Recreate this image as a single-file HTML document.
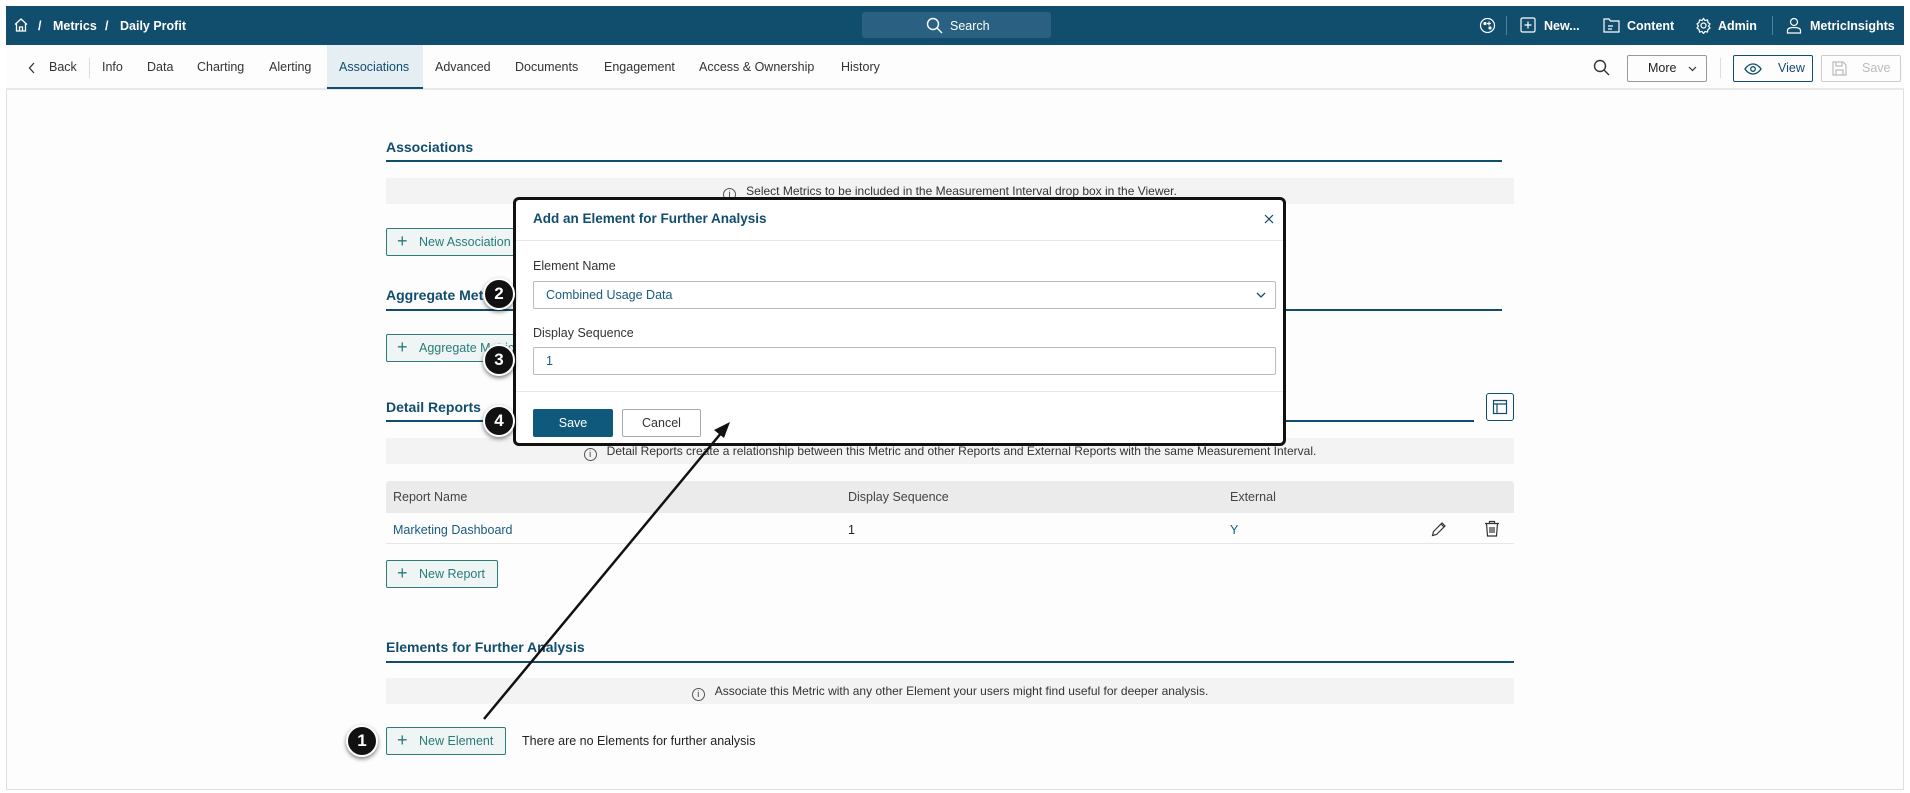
<!DOCTYPE html>
<html><head><meta charset="utf-8">
<style>
*{box-sizing:border-box;margin:0;padding:0}
body{width:1910px;height:793px;overflow:hidden;background:#fff;font-family:"Liberation Sans",sans-serif;font-size:12.5px;color:#222;position:relative}
.frame{position:absolute;left:6px;top:6px;width:1898px;height:784px;background:#fdfdfd;border:1px solid #e0e0e0;border-top:none}
.abs{position:absolute}
.top{position:absolute;left:6px;top:6px;width:1898px;height:39px;background:#114d6d;color:#fff;font-size:12.5px}
.top .t{position:absolute;top:13px;font-weight:bold;white-space:nowrap}
.tabs{position:absolute;left:6px;top:45px;width:1898px;height:45px;border-bottom:2px solid #e8e8e8;background:#fdfdfd}
.tab{position:absolute;top:15px;font-size:12.5px;color:#333;white-space:nowrap}
.h{position:absolute;left:386px;font-weight:bold;font-size:14px;color:#114d6d}
.line{position:absolute;left:386px;height:1.5px;background:#114d6d}
.band{position:absolute;left:386px;width:1128px;height:26px;background:#f3f3f3;font-size:12px;color:#333;text-align:center;line-height:26px}
.btn{position:absolute;left:386px;height:28px;border:1px solid #2d7c78;background:#eef5f4;color:#2b7a78;font-size:12.5px;line-height:26px;padding-left:32px;border-radius:2px;white-space:nowrap;overflow:hidden}
.btn:before{content:"+";position:absolute;left:10px;top:-1px;font-size:18px;font-weight:normal}
.info{display:inline-block;width:13px;height:13px;border:1px solid #555;border-radius:50%;font-size:9px;line-height:11px;text-align:center;margin-right:10px;vertical-align:-2px}
.badge{position:absolute;width:32px;height:32px;border-radius:50%;background:#111;border:2px solid #fff;box-shadow:0 2px 4px rgba(0,0,0,.5);color:#fff;font-weight:bold;font-size:17px;text-align:center;line-height:28px}
.modal{position:absolute;left:513px;top:197px;width:773px;height:249px;background:#fff;border:3px solid #111;border-radius:6px}
.inp{position:absolute;left:17px;width:743px;height:28px;border:1px solid #bbb;border-radius:2px;color:#1a5a80;font-size:12.5px;line-height:26px;padding-left:12px}
</style></head><body>
<div class="frame"></div>
<div class="top">
<svg class="abs" style="left:7px;top:11px" width="16" height="16" viewBox="0 0 16 16" fill="none" stroke="#fff" stroke-width="1.3"><path d="M2 7.5L8 2l6 5.5M3.5 6.5V14h9V6.5M6.5 14v-4h3v4"/></svg>
<span class="t" style="left:32px">/</span><span class="t" style="left:47px">Metrics</span><span class="t" style="left:99px">/</span><span class="t" style="left:114px">Daily Profit</span>
<div class="abs" style="left:856px;top:6px;width:189px;height:26px;background:#2a6182;border-radius:3px"></div>
<svg class="abs" style="left:920px;top:11px" width="17" height="17" viewBox="0 0 17 17" fill="none" stroke="#fff" stroke-width="1.4"><circle cx="7" cy="7" r="5.5"/><path d="M11 11l5 5"/></svg>
<span class="t" style="left:944px;font-weight:normal">Search</span>
<svg class="abs" style="left:1473px;top:11px" width="17" height="17" viewBox="0 0 17 17" fill="none" stroke="#fff" stroke-width="1.2"><circle cx="8.5" cy="8.5" r="7"/><circle cx="6" cy="6.5" r="1" fill="#fff"/><circle cx="11" cy="11" r="1" fill="#fff"/><path d="M10 4.5v4M8 6.5h4"/></svg>
<div class="abs" style="left:1500px;top:10px;width:1px;height:19px;background:#50809a"></div>
<svg class="abs" style="left:1514px;top:11px" width="16" height="16" viewBox="0 0 16 16" fill="none" stroke="#fff" stroke-width="1.2"><rect x="1" y="1" width="14" height="14" rx="1.5"/><path d="M8 4.5v7M4.5 8h7"/></svg>
<span class="t" style="left:1538px">New...</span>
<svg class="abs" style="left:1597px;top:11px" width="17" height="16" viewBox="0 0 17 16" fill="none" stroke="#fff" stroke-width="1.2"><path d="M1 2h5l1.5 2H16v11H1z M5 9h5M5 12h4"/></svg>
<span class="t" style="left:1621px">Content</span>
<svg class="abs" style="left:1689px;top:11px" width="17" height="17" viewBox="0 0 17 17" fill="none" stroke="#fff" stroke-width="1.2"><circle cx="8.5" cy="8.5" r="2.5"/><path d="M8.5 1.5l1.5 2 2.5-.5.5 2.5 2 1.5-1.5 2 1.5 2-2 1.5-.5 2.5-2.5-.5-1.5 2-1.5-2-2.5.5-.5-2.5-2-1.5 1.5-2-1.5-2 2-1.5.5-2.5 2.5.5z"/></svg>
<span class="t" style="left:1712px">Admin</span>
<div class="abs" style="left:1766px;top:10px;width:1px;height:19px;background:#50809a"></div>
<svg class="abs" style="left:1780px;top:11px" width="16" height="17" viewBox="0 0 16 17" fill="none" stroke="#fff" stroke-width="1.2"><circle cx="8" cy="5" r="3.5"/><path d="M1.5 16v-2.5c0-2 2-3 6.5-3s6.5 1 6.5 3V16z"/></svg>
<span class="t" style="left:1804px">MetricInsights</span>
</div>
<div class="tabs">
<svg class="abs" style="left:22px;top:17px" width="8" height="12" viewBox="0 0 8 12" fill="none" stroke="#333" stroke-width="1.3"><path d="M6 1L1.5 6 6 11"/></svg>
<span class="tab" style="left:43px">Back</span>
<div class="abs" style="left:83px;top:13px;width:1px;height:20px;background:#ddd"></div>
<span class="tab" style="left:96px">Info</span>
<span class="tab" style="left:141px">Data</span>
<span class="tab" style="left:191px">Charting</span>
<span class="tab" style="left:263px">Alerting</span>
<div class="abs" style="left:321px;top:0;width:96px;height:44px;background:#e5eef2;border-bottom:2px solid #114d6d"></div>
<span class="tab" style="left:333px;color:#114d6d">Associations</span>
<span class="tab" style="left:429px">Advanced</span>
<span class="tab" style="left:509px">Documents</span>
<span class="tab" style="left:598px">Engagement</span>
<span class="tab" style="left:693px">Access &amp; Ownership</span>
<span class="tab" style="left:835px">History</span>
<svg class="abs" style="left:1587px;top:14px" width="17" height="17" viewBox="0 0 17 17" fill="none" stroke="#333" stroke-width="1.4"><circle cx="7" cy="7" r="5.5"/><path d="M11 11l5 5"/></svg>
<div class="abs" style="left:1621px;top:10px;width:80px;height:27px;border:1px solid #999;border-radius:2px;font-size:12.5px;line-height:25px;padding-left:20px;color:#222">More</div>
<svg class="abs" style="left:1682px;top:21px" width="9" height="6" viewBox="0 0 9 6" fill="none" stroke="#333" stroke-width="1.2"><path d="M1 1l3.5 3.5L8 1"/></svg>
<div class="abs" style="left:1714px;top:13px;width:1px;height:20px;background:#ddd"></div>
<div class="abs" style="left:1727px;top:10px;width:80px;height:27px;border:1px solid #114d6d;border-radius:2px;font-size:12.5px;line-height:25px;padding-left:44px;color:#114d6d">View</div>
<svg class="abs" style="left:1738px;top:18px" width="18" height="12" viewBox="0 0 18 12" fill="none" stroke="#114d6d" stroke-width="1.3"><path d="M1 6s3-5 8-5 8 5 8 5-3 5-8 5-8-5-8-5z"/><circle cx="9" cy="6" r="2.3"/></svg>
<div class="abs" style="left:1815px;top:10px;width:80px;height:27px;border:1px solid #ccc;border-radius:2px;font-size:12.5px;line-height:25px;padding-left:40px;color:#bbb">Save</div>
<svg class="abs" style="left:1826px;top:16px" width="15" height="15" viewBox="0 0 15 15" fill="none" stroke="#bbb" stroke-width="1.2"><path d="M1 1h10l3 3v10H1z M4 1v4h6V1 M4 14V9h7v5"/></svg>
</div>

<div class="h" style="top:139px">Associations</div>
<div class="line" style="top:160px;width:1116px"></div>
<div class="band" style="top:178px"><span class="info">i</span>Select Metrics to be included in the Measurement Interval drop box in the Viewer.</div>
<div class="btn" style="top:228px;width:132px">New Association</div>
<div class="h" style="top:287px">Aggregate Metrics</div>
<div class="line" style="top:309px;width:1116px"></div>
<div class="btn" style="top:334px;width:132px">Aggregate Metric</div>
<div class="h" style="top:399px">Detail Reports</div>
<div class="line" style="top:420px;width:1088px"></div>
<div class="abs" style="left:1486px;top:393px;width:28px;height:28px;border:1px solid #114d6d;border-radius:3px"></div>
<svg class="abs" style="left:1492px;top:399px" width="16" height="16" viewBox="0 0 16 16" fill="none" stroke="#114d6d" stroke-width="1.2"><rect x="1.5" y="1.5" width="13" height="13"/><path d="M1.5 5h13M5 5v9.5"/></svg>
<div class="band" style="top:438px"><span class="info">i</span>Detail Reports create a relationship between this Metric and other Reports and External Reports with the same Measurement Interval.</div>
<div class="abs" style="left:386px;top:481px;width:1128px;height:32px;background:#ebebeb;border-radius:3px 3px 0 0"></div>
<span class="abs" style="left:393px;top:490px;color:#444">Report Name</span>
<span class="abs" style="left:848px;top:490px;color:#444">Display Sequence</span>
<span class="abs" style="left:1230px;top:490px;color:#444">External</span>
<div class="abs" style="left:386px;top:543px;width:1128px;height:1px;background:#e6e6e6"></div>
<span class="abs" style="left:393px;top:523px;color:#1a5a80">Marketing Dashboard</span>
<span class="abs" style="left:848px;top:523px">1</span>
<span class="abs" style="left:1230px;top:523px;color:#1a5a80">Y</span>
<svg class="abs" style="left:1431px;top:521px" width="16" height="16" viewBox="0 0 16 16" fill="none" stroke="#333" stroke-width="1.2"><path d="M1.5 14.5l1-4L11 2l3 3-8.5 8.5z M10 3l3 3"/></svg>
<svg class="abs" style="left:1484px;top:520px" width="16" height="17" viewBox="0 0 16 17" fill="none" stroke="#333" stroke-width="1.2"><path d="M1 3.5h14M5.5 3.5V1.5h5v2M2.5 3.5l1 12.5h9l1-12.5M6 7v6M8 7v6M10 7v6"/></svg>
<div class="btn" style="top:560px;width:112px">New Report</div>
<div class="h" style="top:639px">Elements for Further Analysis</div>
<div class="line" style="top:661px;width:1128px"></div>
<div class="band" style="top:678px"><span class="info">i</span>Associate this Metric with any other Element your users might find useful for deeper analysis.</div>
<div class="btn" style="top:727px;width:120px">New Element</div>
<span class="abs" style="left:522px;top:734px">There are no Elements for further analysis</span>

<div class="modal">
<div class="abs" style="left:17px;top:11px;font-weight:bold;font-size:13.5px;color:#114d6d">Add an Element for Further Analysis</div>
<svg class="abs" style="left:748px;top:14px" width="10" height="10" viewBox="0 0 10 10" stroke="#114d6d" stroke-width="1.2"><path d="M1 1l8 8M9 1L1 9"/></svg>
<div class="abs" style="left:0;top:40px;width:767px;height:1px;background:#e8e8e8"></div>
<div class="abs" style="left:17px;top:59px;color:#333">Element Name</div>
<div class="inp" style="top:81px">Combined Usage Data</div>
<svg class="abs" style="left:740px;top:92px" width="10" height="7" viewBox="0 0 10 7" fill="none" stroke="#114d6d" stroke-width="1.3"><path d="M1 1l4 4 4-4"/></svg>
<div class="abs" style="left:17px;top:126px;color:#333">Display Sequence</div>
<div class="inp" style="top:147px">1</div>
<div class="abs" style="left:0;top:191px;width:767px;height:1px;background:#e8e8e8"></div>
<div class="abs" style="left:17px;top:209px;width:80px;height:28px;background:#0f5a7c;color:#fff;border-radius:2px;text-align:center;line-height:28px">Save</div>
<div class="abs" style="left:106px;top:209px;width:79px;height:28px;border:1px solid #aaa;border-radius:2px;text-align:center;line-height:26px;color:#333">Cancel</div>
</div>

<svg class="abs" style="left:0;top:0" width="1910" height="793"><line x1="484" y1="719" x2="722" y2="432" stroke="#111" stroke-width="2.5"/><polygon points="730,422 714,430 724,438" fill="#111"/></svg>

<div class="badge" style="left:346px;top:725px">1</div>
<div class="badge" style="left:483px;top:278px">2</div>
<div class="badge" style="left:483px;top:344px">3</div>
<div class="badge" style="left:483px;top:405px">4</div>
</body></html>
